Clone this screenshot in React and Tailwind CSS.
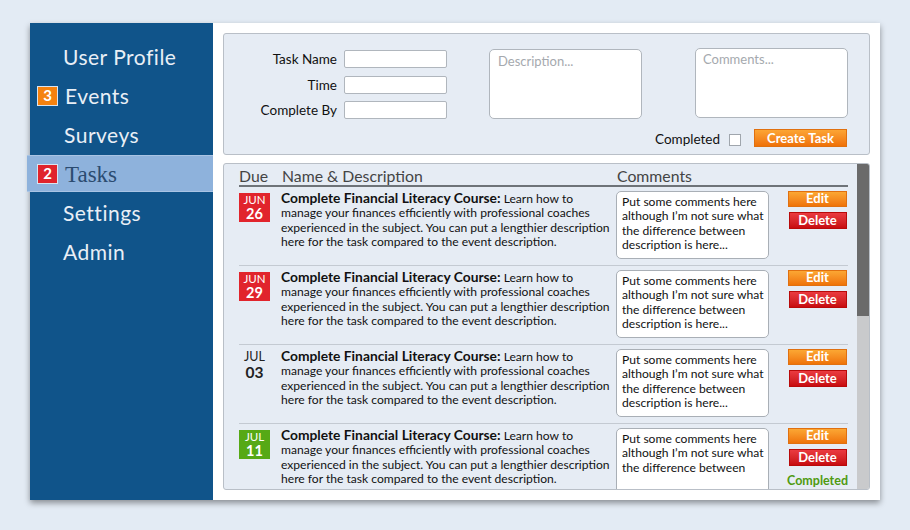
const tasks = [
  { mon: "JUN", day: "26", kind: "red", comment: ["Put some comments here", "although I’m not sure what", "the difference between", "description is here..."] },
  { mon: "JUN", day: "29", kind: "red", comment: ["Put some comments here", "although I’m not sure what", "the difference between", "description is here..."] },
  { mon: "JUL", day: "03", kind: "plain", comment: ["Put some comments here", "although I’m not sure what", "the difference between", "description is here..."] },
  { mon: "JUL", day: "11", kind: "green", done: true, comment: ["Put some comments here", "although I’m not sure what", "the difference between"] },
]

function Badge({ n, color })
{
  return (
    <span className={`w-[21px] h-[20px] flex items-center justify-center text-white font-bold text-[15px] border border-[#d8e4f0] ${color}`}>
      {n}
    </span>
  )
}

function DateBox({ mon, day, kind })
{
  if (kind === "plain") {
    return (
      <div className="w-[31px] flex flex-col items-center text-[#222] pt-[1px]">
        <span className="text-[12.5px] leading-[14px]">{mon}</span>
        <span className="text-[15.5px] leading-[17px] font-bold">{day}</span>
      </div>
    )
  }
  const bg = kind === "red" ? "bg-[#e1242c]" : "bg-[#56a915]"
  return (
    <div className={`w-[31px] h-[29px] ${bg} flex flex-col items-center justify-center text-white mt-[2px]`}>
      <span className="text-[11.5px] leading-[13px]">{mon}</span>
      <span className="text-[14.5px] leading-[15px] font-bold">{day}</span>
    </div>
  )
}

function TaskRow({ t, last })
{
  return (
    <div className={`flex pt-[4px] ${last ? "h-[66px]" : "h-[79px] border-b border-[#c4cad2]"}`}>
      <div className="w-[42px] flex">
        <DateBox mon={t.mon} day={t.day} kind={t.kind} />
      </div>
      <div className="w-[335px] text-[12.1px] leading-[14.5px] text-[#111] whitespace-nowrap">
        <div><span className="font-bold text-[13.8px]">Complete Financial Literacy Course:</span> Learn how to</div>
        <div>manage your finances efficiently with professional coaches</div>
        <div>experienced in the subject. You can put a lengthier description</div>
        <div>here for the task compared to the event description.</div>
      </div>
      <div className="w-[153px] h-[68px] bg-white border border-[#a9afb6] rounded-[5px] px-[5px] pt-[3px] text-[12.1px] leading-[14.5px] text-[#111] whitespace-nowrap">
        {t.comment.map((c, i) => <div key={i}>{c}</div>)}
      </div>
      <div className="ml-[19px] w-[59px] flex flex-col items-center">
        <button className="w-[59px] h-[16px] bg-gradient-to-b from-[#fba733] to-[#ef7306] text-white font-bold text-[13px] leading-none border border-[#e07010]">Edit</button>
        <button className="mt-[5px] w-[58px] h-[17px] bg-gradient-to-b from-[#ea3a40] to-[#c80a0e] text-white font-bold text-[13px] leading-none border border-[#b80a0a]">Delete</button>
        {t.done && <span className="mt-[9px] text-[#4f9a10] font-bold text-[12.5px] leading-none">Completed</span>}
      </div>
    </div>
  )
}

export default function App()
{
  return (
    <div className="w-[910px] h-[530px] bg-[#e3ebf4] pt-[23px] pl-[30px] overflow-hidden" style={{ fontFamily: "Lato, 'Open Sans', sans-serif" }}>
      <div className="w-[850px] h-[477px] flex bg-white shadow-[0_3px_6px_rgba(0,0,0,0.4)]">
        {/* Sidebar */}
        <nav className="w-[183px] bg-[#10548a] pt-[14px] flex flex-col text-[#e9eff6] text-[21px]">
          <div className="h-[39px] flex items-center pl-[33px] tracking-[0.5px]">User Profile</div>
          <div className="h-[39px] flex items-center pl-[7px] gap-[7px]">
            <Badge n="3" color="bg-[#f5820f]" />
            <span className="tracking-[0.5px]">Events</span>
          </div>
          <div className="h-[39px] flex items-center pl-[34px] tracking-[0.5px]">Surveys</div>
          <div className="h-[37px] my-[1px] -ml-[3px] flex items-center pl-[10px] gap-[7px] bg-[#8eb2dc] border-y border-[#a9c4e4]">
            <Badge n="2" color="bg-[#e0242c]" />
            <span className="text-[#2b4b70] text-[23px] pt-[3px]" style={{ fontFamily: "'Liberation Serif', serif" }}>Tasks</span>
          </div>
          <div className="h-[39px] flex items-center pl-[33px] tracking-[0.5px]">Settings</div>
          <div className="h-[39px] flex items-center pl-[33px] tracking-[0.5px]">Admin</div>
        </nav>

        {/* Content */}
        <main className="flex-1 p-[10px] flex flex-col gap-[8px]">
          {/* New task form */}
          <section className="h-[122px] bg-[#e6ecf4] border border-[#b9bfc7] rounded-[3px] flex pt-[14px] pl-[26px]">
            <div className="grid grid-cols-[87px_103px] gap-x-[7px] gap-y-[7.5px] items-center text-[13.5px] leading-[18px] text-[#111] mt-[2px] h-fit">
              <span className="text-right">Task Name</span>
              <div className="h-[18px] bg-white border border-[#b0b6bd] rounded-[2px]" />
              <span className="text-right">Time</span>
              <div className="h-[18px] bg-white border border-[#b0b6bd] rounded-[2px]" />
              <span className="text-right">Complete By</span>
              <div className="h-[18px] bg-white border border-[#b0b6bd] rounded-[2px]" />
            </div>
            <div className="ml-[42px] mt-[1px] w-[153px] h-[70px] bg-white border border-[#b0b6bd] rounded-[5px] px-[8px] pt-[2px] text-[13px] text-[#a5a9ae]">Description...</div>
            <div className="ml-[53px] w-[153px] flex flex-col">
              <div className="h-[70px] bg-white border border-[#b0b6bd] rounded-[5px] px-[7px] pt-[1px] text-[13px] text-[#a5a9ae]">Comments...</div>
              <div className="mt-[9px] flex items-center justify-end -ml-[45px] pr-[1px]">
                <span className="text-[13.5px] text-[#111] mt-[2px]">Completed</span>
                <span className="ml-[9px] w-[12px] h-[12px] bg-white border border-[#a0a6ad] mt-[4px]" />
                <button className="ml-[13px] w-[93px] h-[18px] bg-gradient-to-b from-[#fca534] to-[#ef7106] text-white font-bold text-[13px] leading-none border border-[#e0700f]">Create Task</button>
              </div>
            </div>
          </section>

          {/* Task list */}
          <section className="h-[329px] bg-[#e6ecf4] border border-[#b9bfc7] rounded-[3px] flex overflow-hidden">
            <div className="flex-1 pl-[15px] pr-[9px]">
              <div className="flex pt-[3px] h-[23px] border-b-2 border-[#6e7378] text-[15.8px] text-[#444] leading-[18px]">
                <span className="w-[43px]">Due</span>
                <span className="w-[335px]">Name &amp; Description</span>
                <span>Comments</span>
              </div>
              {tasks.map((t, i) => <TaskRow key={i} t={t} last={i === tasks.length - 1} />)}
            </div>
            <div className="w-[12px] bg-[#c9cacc] flex flex-col">
              <div className="h-[152px] bg-[#6a6a6a]" />
            </div>
          </section>
        </main>
      </div>
    </div>
  )
}
